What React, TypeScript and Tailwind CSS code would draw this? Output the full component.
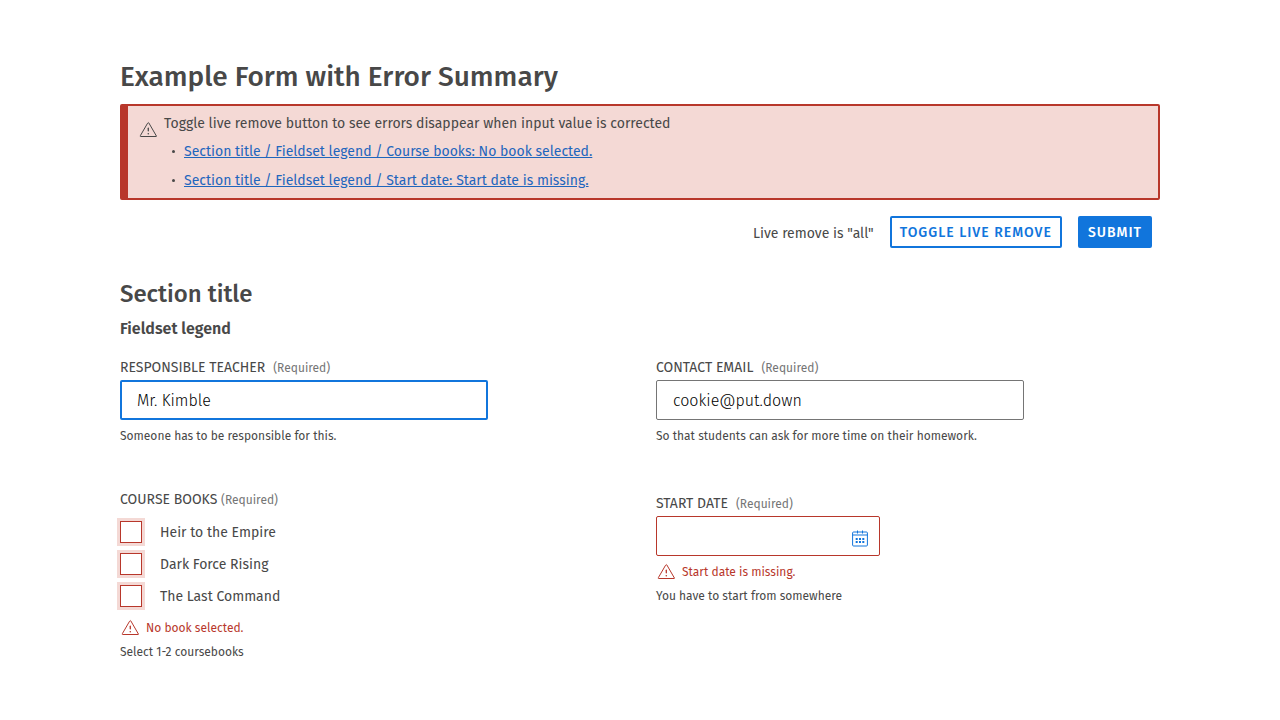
import { useState } from "react";
import type { ReactNode } from "react";

function WarningIcon({ className }: { className: string }) {
  return (
    <svg
      viewBox="0 0 20 20"
      fill="none"
      stroke="currentColor"
      strokeLinecap="round"
      strokeLinejoin="round"
      className={className}
      aria-hidden="true"
    >
      <path d="M9.8 2.9a.6.6 0 0 1 1 0l7.6 13.1a.35.35 0 0 1-.3.5H2.5a.35.35 0 0 1-.3-.5z" />
      <path d="M10.3 8.2v2.6" strokeWidth="1.3" />
      <circle cx="10.3" cy="13.7" r=".8" fill="currentColor" stroke="none" />
    </svg>
  );
}

function CalendarIcon() {
  return (
    <svg viewBox="0 0 16 17" className="h-[17px] w-4" fill="none" stroke="currentColor" aria-hidden="true">
      <rect x=".6" y="2" width="14.8" height="14" rx="1" />
      <path d="M.5 5h15M5.5 .5v3M10.5 .5v3" />
      <g fill="currentColor" stroke="none">
        <path d="M3.7 8h2v2h-2zM7 8h2v2H7zM10.3 8h2v2h-2zM3.7 11h2v2h-2zM7 11h2v2H7zM10.3 11h2v2h-2z" />
      </g>
    </svg>
  );
}

function Required() {
  return <span className="text-xs text-[#757575]">(Required)</span>;
}

function FieldLabel({ htmlFor, children }: { htmlFor: string; children: ReactNode }) {
  return (
    <label htmlFor={htmlFor} className="flex items-baseline gap-2 leading-6">
      <span className="uppercase">{children}</span>
      <Required />
    </label>
  );
}

function FieldError({ id, children }: { id: string; children: ReactNode }) {
  return (
    <p id={id} className="mt-1 flex items-center gap-1.5 text-xs leading-6 text-[#b8372b]">
      <WarningIcon className="size-5 shrink-0" />
      {children}
    </p>
  );
}

const inputClass =
  "block h-10 w-full rounded-xs border bg-white text-base font-light text-black outline-none";

const buttonClass =
  "h-8 rounded-xs border-2 border-[#1175dc] px-2 pt-0.5 leading-6 font-medium tracking-[1px] uppercase";

const errors = [
  { href: "#course-books", text: "Section title / Fieldset legend / Course books: No book selected." },
  { href: "#start-date", text: "Section title / Fieldset legend / Start date: Start date is missing." },
];

const books = ["Heir to the Empire", "Dark Force Rising", "The Last Command"];

export default function App() {
  const [mode, setMode] = useState("all");

  return (
    <main className="px-[120px] pt-14 pb-14 font-['Fira_Sans','Noto_Sans',sans-serif] text-sm text-[#484848]">
      <h1 className="text-[28px] leading-[42px] font-medium">Example Form with Error Summary</h1>

      <form onSubmit={(e) => e.preventDefault()} noValidate>
        <div
          role="alert"
          className="mt-1.5 flex items-start gap-1.5 rounded-xs border-2 border-l-8 border-[#b8372b] bg-[#f4d9d5] py-2 pr-2 pl-2.5 leading-5"
        >
          <WarningIcon className="mt-1.5 size-5 shrink-0" />
          <div>
            <p>Toggle live remove button to see errors disappear when input value is corrected</p>
            <ul className="-mb-px mt-2 flex flex-col gap-[9px]">
              {errors.map((error) => (
                <li key={error.href} className="flex items-center gap-[9px] pl-2">
                  <span className="mb-0.5 size-[3px] rounded-full bg-current" />
                  <a href={error.href} className="text-[#1f66bd] underline">
                    {error.text}
                  </a>
                </li>
              ))}
            </ul>
          </div>
        </div>

        <div className="mt-4 flex items-center justify-end gap-4 pr-2">
          <span className="pt-1 leading-7">Live remove is "{mode}"</span>
          <button
            type="button"
            onClick={() => setMode(mode === "all" ? "none" : "all")}
            className={`${buttonClass} text-[#1175dc]`}
          >
            Toggle live remove
          </button>
          <button type="submit" className={`${buttonClass} bg-[#1175dc] text-white`}>
            Submit
          </button>
        </div>

        <section className="mt-7">
          <h2 className="text-2xl leading-9 font-medium">Section title</h2>
          <fieldset>
            <legend className="pt-1 text-base leading-[26px] font-semibold">Fieldset legend</legend>
            <div className="mt-3.5 grid grid-cols-2 gap-x-8 gap-y-10">
              <div className="max-w-[368px]">
                <FieldLabel htmlFor="teacher">Responsible teacher</FieldLabel>
                <input
                  id="teacher"
                  type="text"
                  defaultValue="Mr. Kimble"
                  aria-describedby="teacher-help"
                  className={`${inputClass} border-2 border-[#1175dc] px-[15px]`}
                />
                <p id="teacher-help" className="mt-1 text-xs leading-6">
                  Someone has to be responsible for this.
                </p>
              </div>

              <div className="max-w-[368px]">
                <FieldLabel htmlFor="email">Contact email</FieldLabel>
                <input
                  id="email"
                  type="email"
                  defaultValue="cookie@put.down"
                  aria-describedby="email-help"
                  className={`${inputClass} border-[#757575] px-4`}
                />
                <p id="email-help" className="mt-1 text-xs leading-6">
                  So that students can ask for more time on their homework.
                </p>
              </div>

              <fieldset id="course-books" aria-describedby="books-error books-help">
                <legend className="leading-6">
                  <span className="uppercase">Course books</span> <Required />
                </legend>
                <div className="mt-1">
                  {books.map((book) => (
                    <label key={book} className="flex h-8 items-center gap-[18px]">
                      <input
                        type="checkbox"
                        className="size-[22px] appearance-none border border-[#b8372b] bg-white ring-3 ring-[#f4d9d5] checked:bg-[#1175dc]"
                      />
                      <span className="pt-0.5">{book}</span>
                    </label>
                  ))}
                </div>
                <FieldError id="books-error">No book selected.</FieldError>
                <p id="books-help" className="text-xs leading-6">
                  Select 1-2 coursebooks
                </p>
              </fieldset>

              <div className="pt-1">
                <FieldLabel htmlFor="start-date">Start date</FieldLabel>
                <div className="flex h-10 max-w-56 items-center rounded-xs border border-[#b8372b] bg-white pr-[11px]">
                  <input
                    id="start-date"
                    type="text"
                    aria-invalid="true"
                    aria-describedby="date-error date-help"
                    className="h-full min-w-0 flex-1 px-4 text-base font-light text-black outline-none"
                  />
                  <button type="button" aria-label="Choose date" className="pt-1 text-[#1175dc]">
                    <CalendarIcon />
                  </button>
                </div>
                <FieldError id="date-error">Start date is missing.</FieldError>
                <p id="date-help" className="text-xs leading-6">
                  You have to start from somewhere
                </p>
              </div>
            </div>
          </fieldset>
        </section>
      </form>
    </main>
  );
}
